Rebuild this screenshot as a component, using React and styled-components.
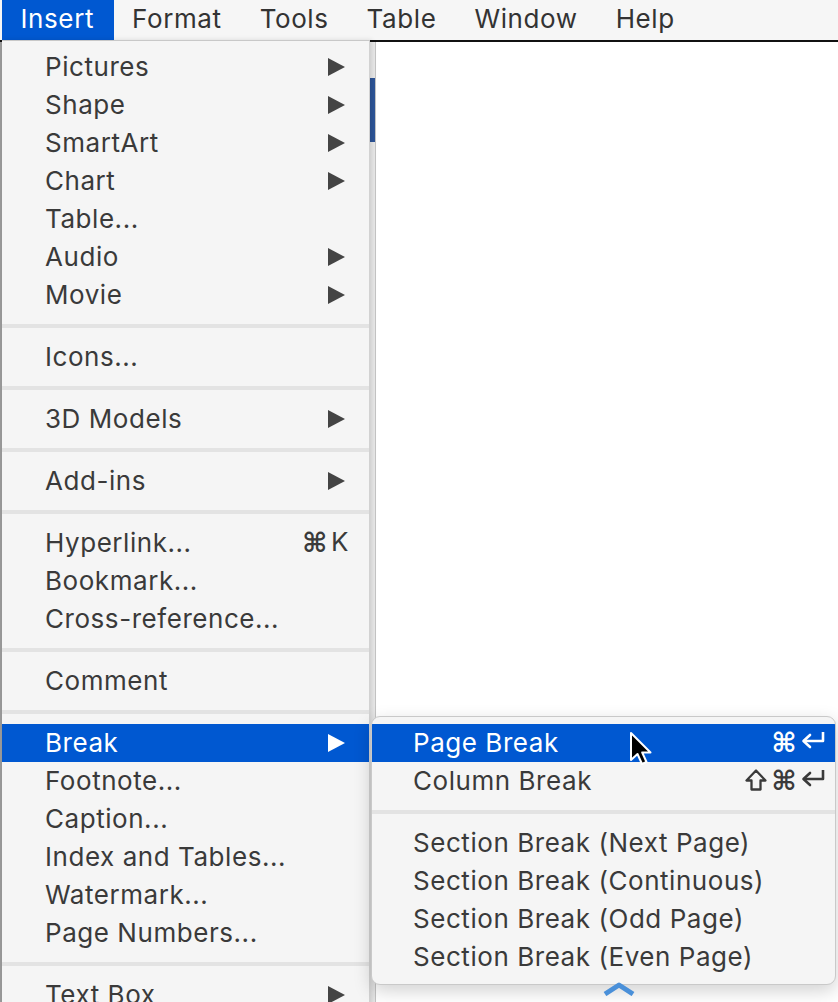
import React from "react";
import styled, { createGlobalStyle } from "styled-components";

const Global = createGlobalStyle`
  html, body { margin: 0; padding: 0; background: #ffffff; }
  body { font-family: Inter, "Noto Sans", "Liberation Sans", sans-serif; overflow: hidden; }
`;

const Screen = styled.div`
  position: relative;
  width: 838px;
  height: 1002px;
  overflow: hidden;
  background: #ffffff;
`;

const MenuBar = styled.div`
  display: flex;
  align-items: stretch;
  height: 40px;
  padding-left: 2px;
  background: #f6f6f6;
  border-bottom: 2px solid #111111;
`;

const BarItem = styled.div`
  display: flex;
  align-items: center;
  padding: 0 19.5px 3px 18.5px;
  font-size: 26px;
  letter-spacing: 0.6px;
  color: ${(p) => (p.$active ? "#ffffff" : "#333333")};
  background: ${(p) => (p.$active ? "#0058d1" : "transparent")};
`;

const Workspace = styled.div`
  display: flex;
  height: 960px;
`;

const AppSide = styled.div`
  width: 376px;
  display: flex;
  flex-direction: column;
  background: #e9e9e9;
  border-left: 2px solid #9a9a9a;
  border-right: 1px solid #c4c4c4;
  box-sizing: border-box;
`;

const RibbonBlue = styled.div`
  margin-top: 36px;
  height: 64px;
  background: #2d5598;
`;

const Document = styled.div`
  flex: 1;
  background: #ffffff;
`;

const Menu = styled.div`
  position: absolute;
  left: 2px;
  top: 40px;
  width: 368px;
  padding-top: 7px;
  background: #f5f5f5;
  border-top: 1px solid #c8c8c8;
  border-right: 1px solid #d2d2d2;
  box-shadow: 2px 0 5px rgba(0, 0, 0, 0.12);
  box-sizing: border-box;
`;

const SubMenu = styled.div`
  position: absolute;
  left: 371px;
  top: 716px;
  width: 465px;
  padding: 7px 0 8px;
  background: #f5f5f5;
  border: 1px solid #c9c9c9;
  border-radius: 9px;
  box-shadow: 0 6px 18px rgba(0, 0, 0, 0.18);
  box-sizing: border-box;
  overflow: hidden;
`;

const Row = styled.div`
  display: flex;
  align-items: center;
  justify-content: space-between;
  height: 38px;
  box-sizing: border-box;
  padding: 0 ${(p) => p.$right ?? 24}px 2px ${(p) => p.$left ?? 43}px;
  font-size: 26px;
  letter-spacing: 0.55px;
  color: ${(p) => (p.$active ? "#ffffff" : "#3a3a3a")};
  background: ${(p) => (p.$active ? "#0058d1" : "transparent")};
  white-space: nowrap;
`;

const Separator = styled.div`
  height: 4px;
  margin: 10px 0;
  background: #e3e3e3;
`;

const Arrow = styled.span`
  width: 0;
  height: 0;
  margin-top: 2px;
  border-top: 9px solid transparent;
  border-bottom: 9px solid transparent;
  border-left: 17px solid ${(p) => (p.$active ? "#ffffff" : "#444444")};
`;

const Shortcut = styled.span`
  display: flex;
  align-items: center;
  gap: 3px;
  margin-right: ${(p) => p.$pull ?? 0}px;
  font-family: "DejaVu Sans", "Noto Sans", sans-serif;
  font-size: 26px;
  color: inherit;
`;

const KeyGlyph = styled.span`
  font-family: "DejaVu Sans", sans-serif;
  font-size: 27px;
  font-weight: bold;
  line-height: 1;
`;

const KeyText = styled.span`
  font-family: Inter, "Noto Sans", sans-serif;
  font-size: 26px;
  line-height: 1;
`;

const KeyIcon = styled.svg`
  display: block;
  margin-top: ${(p) => p.$lift ?? 0}px;
`;

const Cursor = styled.svg`
  position: absolute;
  left: 628px;
  top: 731px;
`;

const BlueMark = styled.svg`
  position: absolute;
  left: 603px;
  top: 982px;
`;

const ReturnKey = () => (
  <KeyIcon width="26" height="20" viewBox="0 0 26 20" $lift={-4}>
    <path d="M23 2 V11 H4" fill="none" stroke="currentColor" strokeWidth="2.6" strokeLinejoin="round" />
    <path d="M10 5 L3.5 11 L10 17" fill="none" stroke="currentColor" strokeWidth="2.6" strokeLinejoin="round" strokeLinecap="round" />
  </KeyIcon>
);

const ShiftKey = () => (
  <KeyIcon width="24" height="24" viewBox="0 0 24 24">
    <path d="M12 2.5 L2.5 12.5 H7.5 V21.5 H16.5 V12.5 H21.5 Z" fill="none" stroke="currentColor" strokeWidth="2.3" strokeLinejoin="round" />
  </KeyIcon>
);

const renderKeys = (keys) =>
  keys.map((k, i) => {
    if (k === "ret") return <ReturnKey key={i} />;
    if (k === "shift") return <ShiftKey key={i} />;
    if (k === "cmd") return <KeyGlyph key={i}>⌘</KeyGlyph>;
    return <KeyText key={i}>{k}</KeyText>;
  });

const mainItems = [
  { t: "Pictures", a: true },
  { t: "Shape", a: true },
  { t: "SmartArt", a: true },
  { t: "Chart", a: true },
  { t: "Table..." },
  { t: "Audio", a: true },
  { t: "Movie", a: true },
  "sep",
  { t: "Icons..." },
  "sep",
  { t: "3D Models", a: true },
  "sep",
  { t: "Add-ins", a: true },
  "sep",
  { t: "Hyperlink...", k: ["cmd", "K"] },
  { t: "Bookmark..." },
  { t: "Cross-reference..." },
  "sep",
  { t: "Comment" },
  "sep",
  { t: "Break", a: true, active: true },
  { t: "Footnote..." },
  { t: "Caption..." },
  { t: "Index and Tables..." },
  { t: "Watermark..." },
  { t: "Page Numbers..." },
  "sep",
  { t: "Text Box", a: true },
];

const subItems = [
  { t: "Page Break", k: ["cmd", "ret"], active: true },
  { t: "Column Break", k: ["shift", "cmd", "ret"] },
  "sep",
  { t: "Section Break (Next Page)" },
  { t: "Section Break (Continuous)" },
  { t: "Section Break (Odd Page)" },
  { t: "Section Break (Even Page)" },
];

export default function App() {
  return (
    <Screen>
      <Global />
      <MenuBar>
        {["Insert", "Format", "Tools", "Table", "Window", "Help"].map((m, i) => (
          <BarItem key={m} $active={i === 0}>
            {m}
          </BarItem>
        ))}
      </MenuBar>
      <Workspace>
        <AppSide>
          <RibbonBlue />
        </AppSide>
        <Document />
      </Workspace>

      <Menu>
        {mainItems.map((it, i) =>
          it === "sep" ? (
            <Separator key={i} />
          ) : (
            <Row key={i} $active={it.active}>
              <span>{it.t}</span>
              {it.a && <Arrow $active={it.active} />}
              {it.k && <Shortcut $pull={-4}>{renderKeys(it.k)}</Shortcut>}
            </Row>
          )
        )}
      </Menu>

      <SubMenu>
        {subItems.map((it, i) =>
          it === "sep" ? (
            <Separator key={i} />
          ) : (
            <Row key={i} $active={it.active} $left={41} $right={9}>
              <span>{it.t}</span>
              {it.k && <Shortcut>{renderKeys(it.k)}</Shortcut>}
            </Row>
          )
        )}
      </SubMenu>

      <BlueMark width="32" height="14" viewBox="0 0 32 14">
        <path d="M2 12 L16 3 L30 12" fill="none" stroke="#4a90d9" strokeWidth="5" strokeLinejoin="round" />
      </BlueMark>

      <Cursor width="26" height="38" viewBox="0 0 26 38">
        <path
          d="M3 2 L3 29 L9.5 23 L14 33 L18.5 31 L14.2 21.5 L22.5 21.5 Z"
          fill="#000000"
          stroke="#ffffff"
          strokeWidth="2"
          strokeLinejoin="round"
        />
      </Cursor>
    </Screen>
  );
}
